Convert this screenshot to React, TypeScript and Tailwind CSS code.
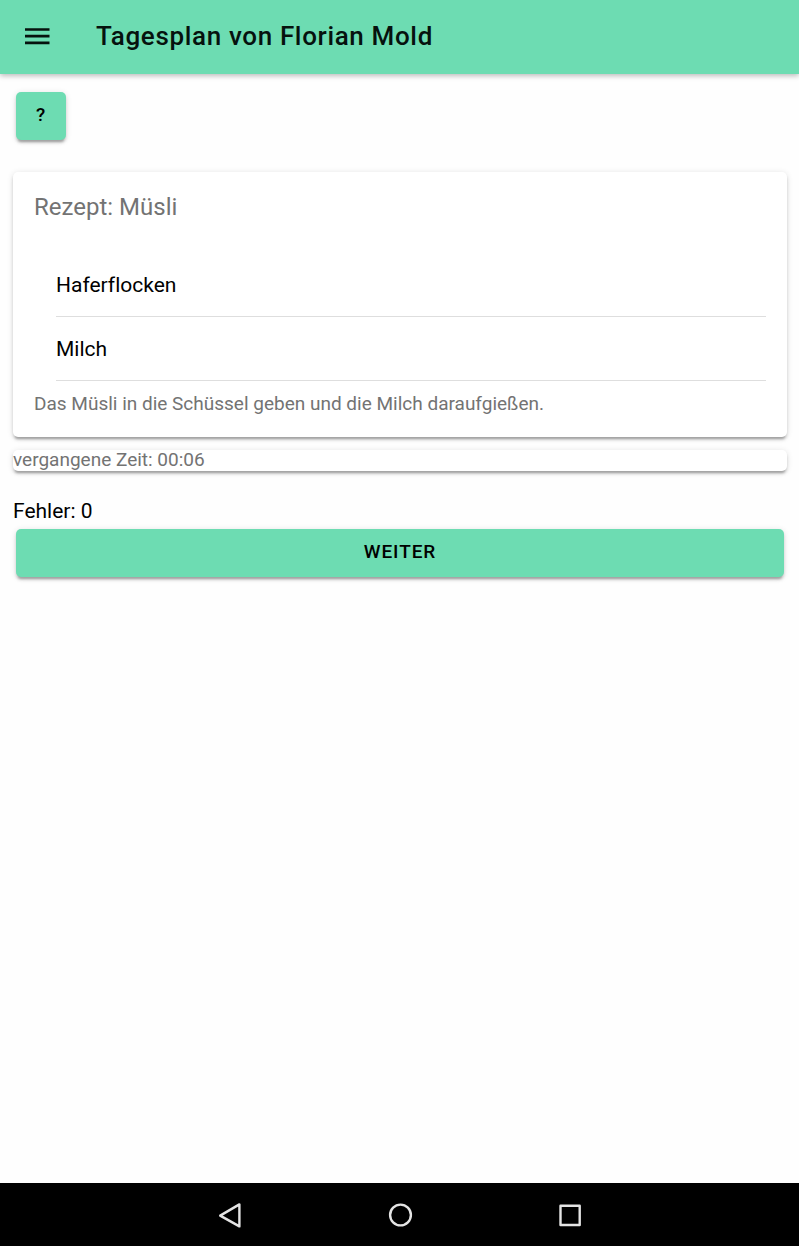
import type { ButtonHTMLAttributes } from "react";

const raised =
  "shadow-[0_4px_2px_-2px_rgba(0,0,0,0.2),0_3px_3px_0_rgba(0,0,0,0.14),0_1px_6px_0_rgba(0,0,0,0.12)]";

const ingredients = ["Haferflocken", "Milch"];

function ActionButton({ className = "", ...props }: ButtonHTMLAttributes<HTMLButtonElement>) {
  return (
    <button
      type="button"
      className={`h-12 rounded-[5px] bg-[#6ddcb2] px-5 pb-0.5 text-[19px] leading-6 font-medium tracking-wider text-black uppercase ${raised} ${className}`}
      {...props}
    />
  );
}

export default function App() {
  return (
    <div className="flex min-h-screen flex-col bg-[#fefefe] font-['Roboto','Liberation_Sans',sans-serif] text-black [font-variant-ligatures:none]">
      <header className="flex h-[74px] items-center gap-[43px] bg-[#6ddcb2] px-[21px] shadow-[0_2px_5px_rgba(0,0,0,0.26)]">
        <button type="button" aria-label="Menü" className="flex size-8 items-center justify-center">
          <svg viewBox="0 0 32 32" className="size-8" fill="none" stroke="#06120e" strokeWidth="2.7">
            <path d="M4 8.5h24.5M4 15.2h24.5M4 21.9h24.5" />
          </svg>
        </button>
        <h1 className="pb-0.5 text-[26px] leading-8 font-medium tracking-wide text-[#06120e]">
          Tagesplan von Florian Mold
        </h1>
      </header>

      <main className="flex-1 pt-[18px] pr-3 pl-[13px]">
        <ActionButton className="mx-[3px] block" aria-label="Hilfe">
          ?
        </ActionButton>

        <section className={`mt-8 rounded-[5px] bg-white px-[21px] pt-[19px] pb-[21px] ${raised}`}>
          <h2 className="text-2xl leading-8 text-[#737373]">Rezept: Müsli</h2>
          <ul className="mt-[30px] pl-[22px]">
            {ingredients.map((name) => (
              <li
                key={name}
                className="flex h-16 items-center border-b border-[#dedede] text-[21px] leading-8"
              >
                {name}
              </li>
            ))}
          </ul>
          <p className="mt-[11px] text-[19px] leading-6 text-[#737373]">
            Das Müsli in die Schüssel geben und die Milch daraufgießen.
          </p>
        </section>

        <section
          className={`mt-[13px] rounded-[5px] bg-white pb-0.5 text-[19px] leading-[19px] text-[#737373] ${raised}`}
        >
          vergangene Zeit: 00:06
        </section>

        <p className="mt-6 text-[21px] leading-8">Fehler: 0</p>
        <div className="flex px-[3px] pt-[2px]">
          <ActionButton className="flex-1">Weiter</ActionButton>
        </div>
      </main>

      <nav
        aria-label="System"
        className="flex h-[63px] items-center justify-center gap-[138px] bg-black text-[#e4e4e4]"
      >
        <button type="button" aria-label="Zurück">
          <svg viewBox="0 0 32 32" className="size-8" fill="none" stroke="currentColor" strokeWidth="2.4" strokeLinejoin="round">
            <path d="M25.4 5.4v22L6.2 16.6z" />
          </svg>
        </button>
        <button type="button" aria-label="Startseite">
          <svg viewBox="0 0 32 32" className="size-8" fill="none" stroke="currentColor" strokeWidth="2.4">
            <circle cx="16.5" cy="16" r="10.4" />
          </svg>
        </button>
        <button type="button" aria-label="Übersicht">
          <svg viewBox="0 0 32 32" className="size-8" fill="none" stroke="currentColor" strokeWidth="2.4" strokeLinejoin="round">
            <path d="M6.5 6.8h19.2v19.2H6.5z" />
          </svg>
        </button>
      </nav>
    </div>
  );
}
